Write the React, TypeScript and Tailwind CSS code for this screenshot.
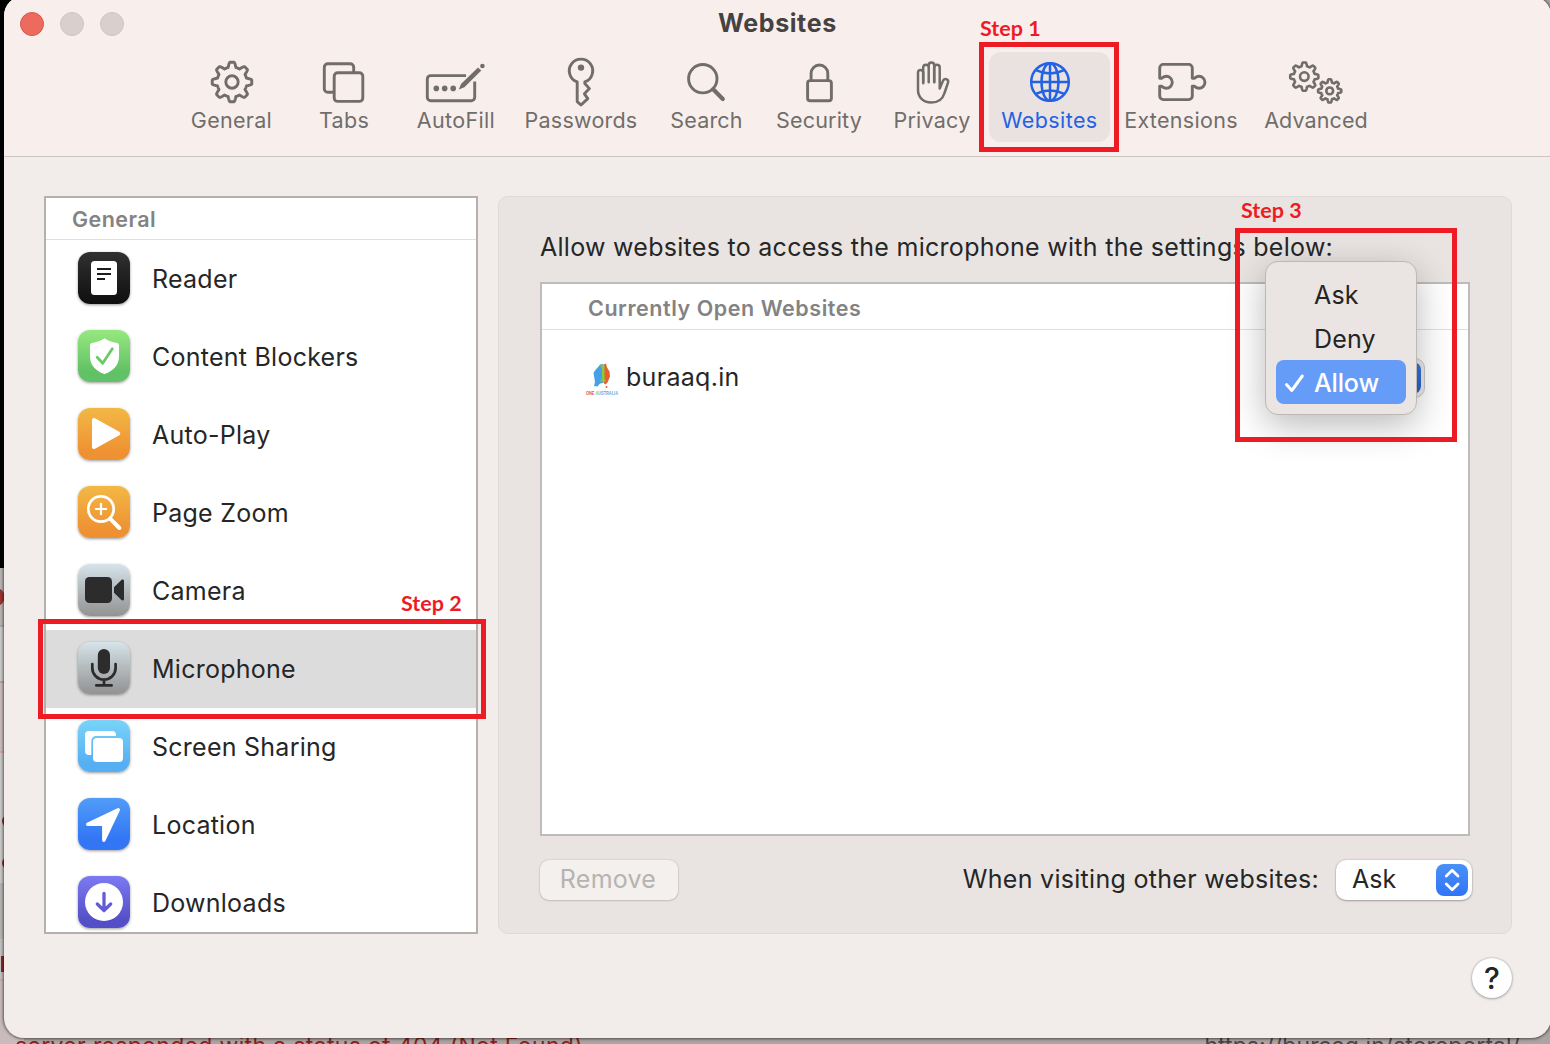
import React from "react";

function gearPath(cx: number, cy: number, rOuter: number, rInner: number) {
  const mid = (rOuter + rInner) / 2;
  const amp = (rOuter - rInner) / 2;
  const points: string[] = [];
  for (let i = 0; i < 240; i++) {
    const a = (i / 240) * Math.PI * 2;
    const wave = Math.max(-1, Math.min(1, 1.9 * Math.cos(8 * a) - 0.1));
    const r = mid + amp * wave;
    points.push(`${(cx + r * Math.sin(a)).toFixed(2)} ${(cy - r * Math.cos(a)).toFixed(2)}`);
  }
  return `M${points.join("L")}Z`;
}

const toolbar: { label: string; width: string; spacing: string; active?: boolean; icon: React.ReactNode }[] = [
  {
    label: "General",
    width: "w-[113px]",
    spacing: "tracking-[0.3px]",
    icon: (
      <>
        <path d={gearPath(32, 28, 19.8, 15)} />
        <circle cx="32" cy="28" r="6.2" />
      </>
    ),
  },
  {
    label: "Tabs",
    width: "w-[112px]",
    spacing: "tracking-[0.3px]",
    icon: (
      <>
        <rect x="22.2" y="18.8" width="28.6" height="28.6" rx="3.5" />
        <path d="M21.500 38.200h-5.700a3.500 3.500 0 0 1-3.500-3.500V13.300a3.500 3.500 0 0 1 3.500-3.500h22.400a3.500 3.500 0 0 1 3.500 3.500V18" />
      </>
    ),
  },
  {
    label: "AutoFill",
    width: "w-[112px]",
    spacing: "tracking-[0.35px]",
    icon: (
      <>
        <path d="M42 21.600H6.800a3.500 3.500 0 0 0-3.500 3.500v18.100a3.500 3.500 0 0 0 3.500 3.500h40.400a3.500 3.500 0 0 0 3.500-3.500V27.500" strokeLinecap="butt" />
        <g fill="currentColor" stroke="none">
          <circle cx="12.300" cy="34.400" r="2.800" />
          <circle cx="20.700" cy="34.400" r="2.800" />
          <circle cx="29.200" cy="34.400" r="2.800" />
          <path d="M34.800 35.600l2.200-5.600L54 13.400l3.300 3.200L40.400 33.300z" />
          <circle cx="58.400" cy="12" r="2.300" />
        </g>
      </>
    ),
  },
  {
    label: "Passwords",
    width: "w-[138px]",
    spacing: "tracking-[0.22px]",
    icon: (
      <>
        <path d="M28.200 47.600V27.900A11.700 11.700 0 1 1 35.800 27.900V29.500L40.400 34.600 35.400 39.800 38.800 44.600 32 51z" />
        <circle cx="32" cy="13.600" r="3.200" fill="currentColor" stroke="none" />
      </>
    ),
  },
  {
    label: "Search",
    width: "w-[113px]",
    spacing: "tracking-[0.2px]",
    icon: (
      <>
        <circle cx="27.800" cy="24.700" r="14.200" />
        <path d="M38.200 35.300L47.800 45" strokeWidth="4.200" />
      </>
    ),
  },
  {
    label: "Security",
    width: "w-[112px]",
    spacing: "tracking-[0.2px]",
    icon: (
      <>
        <rect x="20.600" y="26.600" width="23.800" height="20.200" rx="2.600" />
        <path d="M24.100 26.600V19.400a8.350 8.350 0 0 1 16.700 0v7.200" />
      </>
    ),
  },
  {
    label: "Privacy",
    width: "w-[114px]",
    spacing: "tracking-[0.25px]",
    icon: (
      <g strokeWidth="2.500">
        <path d="M23.200 29.300V18.600a2.600 2.600 0 0 0-5.200 0V36C18 43 23 48.600 31.300 48.600c6.600 0 11.200-3 13.200-9.600L48 28.600c1-3.800-3.800-5-5-1.800L39.700 34.500V13.600a2.750 2.750 0 0 0-5.500 0V28.300" />
        <path d="M23.200 28V13.600a2.750 2.750 0 0 1 5.500 0V28.300M28.700 28V11.200a2.750 2.750 0 0 1 5.500 0V28" />
      </g>
    ),
  },
  {
    label: "Websites",
    width: "w-[121px]",
    spacing: "tracking-[0.4px]",
    active: true,
    icon: (
      <g strokeWidth="2.500">
        <circle cx="32" cy="28" r="18.800" />
        <ellipse cx="32" cy="28" rx="8.500" ry="18.800" />
        <path d="M32 9.200v37.600M13.200 28h37.600M17.900 16.200q14.100 6.600 28.200 0M17.900 39.800q14.100-6.600 28.200 0" />
      </g>
    ),
  },
  {
    label: "Extensions",
    width: "w-[142px]",
    spacing: "tracking-[0.3px]",
    icon: (
      <path d="M10.700 24.300V14a3.600 3.600 0 0 1 3.600-3.600H39.700A3.600 3.600 0 0 1 43.300 14V24.300h2.200A6 6 0 1 1 45.500 32.300h-2.200V42a3.600 3.600 0 0 1-3.600 3.600H14.300A3.600 3.600 0 0 1 10.700 42V32.300h2.100A6 6 0 1 0 12.800 24.300z" />
    ),
  },
  {
    label: "Advanced",
    width: "w-[128px]",
    spacing: "tracking-[0.1px]",
    icon: (
      <g strokeWidth="2.600">
        <path d={gearPath(20.3, 22.6, 14.1, 10.6)} />
        <circle cx="20.300" cy="22.600" r="4.300" />
        <path d={gearPath(45.7, 36.9, 11.6, 8.6)} />
        <circle cx="45.700" cy="36.900" r="3.400" />
      </g>
    ),
  },
];

const categories: { label: string; tile: string; selected?: boolean; icon: React.ReactNode }[] = [
  {
    label: "Reader",
    tile: "from-[#313131] to-[#0f0f0f]",
    icon: (
      <>
        <rect x="13" y="9" width="26" height="34" rx="3.500" fill="#fff" />
        <path d="M19 17h14M19 22h14M19 27h8" stroke="#1c1c1c" strokeWidth="2" />
      </>
    ),
  },
  {
    label: "Content Blockers",
    tile: "from-[#93e67d] from-5% to-[#61c166] to-80%",
    icon: (
      <>
        <path d="M26.500 8.200c3.600 2.400 8 4.100 12.600 4.800q1.900.4 1.900 2.300v10.500c0 9.600-5.200 14.600-13.600 18q-.9.4-1.800 0C17.200 40.400 12 35.400 12 25.800V15.300q0-1.900 1.900-2.300c4.600-.7 9-2.400 12.600-4.800z" fill="#fff" />
        <path d="M19.200 27.300l5.500 6L34.300 18.800" stroke="#68cb68" strokeWidth="2.800" strokeLinecap="round" strokeLinejoin="round" />
      </>
    ),
  },
  {
    label: "Auto-Play",
    tile: "from-[#f2b845] to-[#ee9132] to-85%",
    icon: <path d="M16 12l24.300 13.500L16 39z" fill="#fff" stroke="#fff" strokeWidth="4" strokeLinejoin="round" />,
  },
  {
    label: "Page Zoom",
    tile: "from-[#f2b845] to-[#ee9132] to-85%",
    icon: (
      <g stroke="#fff" strokeLinecap="round">
        <circle cx="23" cy="23" r="12.700" strokeWidth="2.700" />
        <path d="M23 17.800v10.400M17.800 23h10.400" strokeWidth="2.200" />
        <path d="M32.800 33.300l8.600 8.700" strokeWidth="4" />
      </g>
    ),
  },
  {
    label: "Camera",
    tile: "from-[#d6e4ea] to-[#929292]",
    icon: (
      <g fill="#2c2c2c">
        <rect x="7" y="13" width="27" height="26" rx="4.500" />
        <path d="M36 23.200l7.400-7.200c1-.9 2.600-.5 2.600 1v18c0 1.500-1.600 1.900-2.600 1L36 28.800z" />
      </g>
    ),
  },
  {
    label: "Microphone",
    tile: "from-[#d6e4ea] to-[#929292]",
    selected: true,
    icon: (
      <>
        <rect x="19.800" y="7" width="12.200" height="25" rx="6.100" fill="#2c2c2c" />
        <path d="M14.300 22v4a11.600 11.600 0 0 0 23.300 0v-4M26 37.600v5.700M18.300 43.400h15.300" stroke="#2c2c2c" strokeWidth="2.700" strokeLinecap="round" />
      </>
    ),
  },
  {
    label: "Screen Sharing",
    tile: "from-[#79d4f8] to-[#56aef3] to-85%",
    icon: (
      <>
        <path d="M13.300 35H11a4 4 0 0 1-4-4V15a4 4 0 0 1 4-4h23a4 4 0 0 1 4 4v1H18a4.700 4.700 0 0 0-4.700 4.700z" fill="#fff" />
        <rect x="15" y="18" width="30" height="24" rx="4" fill="#fff" />
      </>
    ),
  },
  {
    label: "Location",
    tile: "from-[#519cf8] to-[#3376f5] to-80%",
    icon: <path d="M40.300 11.700L9.700 26.200H25.800V42.300z" fill="#fff" stroke="#fff" strokeWidth="3.400" strokeLinejoin="round" />,
  },
  {
    label: "Downloads",
    tile: "from-[#7d79f2] to-[#544fc7] to-85%",
    icon: (
      <>
        <circle cx="26" cy="26" r="19" fill="#fff" />
        <path d="M26 17.300v17M19.300 28l6.700 6.500 6.700-6.500" stroke="#625dd6" strokeWidth="3.300" strokeLinecap="round" strokeLinejoin="round" />
      </>
    ),
  },
];

function Annotation({ label, box, text }: { label: string; box: string; text: string }) {
  return (
    <>
      <div className={`absolute border-[5px] border-[#ed1c24] ${box}`} />
      <span className={`absolute font-[Lato] text-[21.5px] leading-6 font-bold whitespace-nowrap text-[#ed1c24] ${text}`}>{label}</span>
    </>
  );
}

function Toolbar() {
  return (
    <header className="h-[161px] shrink-0 border-b border-[#cdc5c1] bg-[#f8efed] pt-1">
      <div className="flex h-[52px] items-start">
        <div className="flex gap-4 pt-3 pl-4">
          <span className="size-6 rounded-full border border-[#d5574c] bg-[#ed6a5e]" />
          <span className="size-6 rounded-full border border-[#cdc5c3] bg-[#d9d0ce]" />
          <span className="size-6 rounded-full border border-[#cdc5c3] bg-[#d9d0ce]" />
        </div>
        <h1 className="ml-[594px] pt-[7px] text-[25px] leading-8 font-bold tracking-[0.6px] text-[#464241]">Websites</h1>
      </div>
      <nav className="flex pl-[171px]">
        {toolbar.map((item) => (
          <button
            key={item.label}
            className={`flex h-[90px] flex-col items-center rounded-xl pt-0.5 whitespace-nowrap ${item.width} ${
              item.active ? "bg-[#eae2e0] text-[#2362e3]" : "text-[#706d6b]"
            }`}
          >
            <svg width="64" height="56" viewBox="0 0 64 56" fill="none" stroke="currentColor" strokeWidth="2.900" strokeLinecap="round" strokeLinejoin="round">
              {item.icon}
            </svg>
            <span className={`-mt-1 text-[21.5px] leading-7 ${item.spacing}`}>{item.label}</span>
          </button>
        ))}
      </nav>
    </header>
  );
}

function Sidebar() {
  return (
    <aside className="h-[738px] w-[434px] shrink-0 overflow-hidden border-2 border-[#b4b0ae] bg-white">
      <div className="h-[42px] pl-[26px] text-[21.5px] leading-[42px] font-semibold tracking-[0.45px] text-[#838383] shadow-[inset_0_-1px_0_#dfdfdf]">General</div>
      {categories.map((c) => (
        <div key={c.label} className={`flex h-[78px] items-center gap-[22px] pl-8 ${c.selected ? "bg-[#dcdcdc]" : ""}`}>
          <div className={`mb-0.5 size-[52px] rounded-xl bg-linear-to-b shadow-[0_1px_3px_rgba(0,0,0,0.4)] ${c.tile}`}>
            <svg width="52" height="52" viewBox="0 0 52 52" fill="none">
              {c.icon}
            </svg>
          </div>
          <span className="text-[25px] leading-8 tracking-[0.25px] text-[#262626]">{c.label}</span>
        </div>
      ))}
    </aside>
  );
}

function Favicon() {
  return (
    <svg width="34" height="36" viewBox="0 0 34 36" className="shrink-0">
      <path d="M8.500 13l1.500-2.500L14 6l1-1.500 3-.5v19c-2.500 0-4 1-5.500 3.500l-3.500-.5 1-4z" fill="#45a1e6" />
      <path d="M18.500 4.500l2.500-1 1 4 2.500 4 .5 5-2.500 6-2 2-2-1.500z" fill="#e4602f" />
      <path d="M15 6.500l3-2 1.500 1v14h1v2h-5v-2h1.500V8z" fill="#8fc63f" />
      <circle cx="21.500" cy="27" r="1" fill="#e4602f" />
      <text x="1" y="34.500" fontSize="6" fontWeight="700" fontFamily="Liberation Sans, sans-serif" fill="#5cabdf" textLength="32" lengthAdjust="spacingAndGlyphs">
        <tspan fill="#dc5a3a">ONE</tspan>
        <tspan fill="#93c83f"> A</tspan>USTRALIA
      </text>
    </svg>
  );
}

function PermissionMenu() {
  return (
    <div className="absolute top-[261px] left-[1265px] flex h-[154px] w-[152px] flex-col rounded-[13px] border border-[#bdb8b6] bg-[#eae5e2] p-[10px] text-[25px] text-[#242424] shadow-[0_10px_36px_rgba(0,0,0,0.28)]">
      <div className="h-11 pl-[38px] leading-[47px] tracking-[0.2px]">Ask</div>
      <div className="h-11 pl-[38px] leading-[47px] tracking-[0.2px]">Deny</div>
      <div className="flex h-11 w-[130px] items-center rounded-lg bg-[#659cf7] pl-2 text-white">
        <svg width="22" height="22" viewBox="0 0 22 22" fill="none" stroke="currentColor" strokeWidth="3" strokeLinecap="round" strokeLinejoin="round">
          <path d="M2.500 13.500l5.300 6L18.300 5" />
        </svg>
        <span className="pt-[3px] pl-2 font-medium tracking-[-0.15px]">Allow</span>
      </div>
    </div>
  );
}

function Content() {
  return (
    <section className="flex h-[738px] w-[1014px] flex-col rounded-[10px] border border-[#dfdad7] bg-[#e9e4e1] px-[41px] pt-[34px] text-[#262626]">
      <p className="text-[25px] leading-8 tracking-[0.28px] whitespace-nowrap">Allow websites to access the microphone with the settings below:</p>
      <div className="mt-[19px] h-[554px] w-[930px] shrink-0 border-2 border-[#bebcbb] bg-white">
        <div className="h-[46px] pl-[46px] text-[21.5px] leading-[49px] font-semibold tracking-[0.55px] text-[#838383] shadow-[inset_0_-1px_0_#dfdfdf]">Currently Open Websites</div>
        <div className="flex h-24 items-center pr-[44px] pl-[43px]">
          <Favicon />
          <span className="-mt-0.5 pl-[7px] text-[25px] leading-8 tracking-[0.3px]">buraaq.in</span>
          <div className="ml-auto flex h-10 w-[137px] items-center justify-end rounded-[10px] border border-[#c9c9c9] bg-[#ececec] pr-[3px] -mr-px">
            <span className="size-8 rounded-lg bg-linear-to-b from-[#3a76dc] to-[#2b60cf]" />
          </div>
        </div>
      </div>
      <div className="mt-6 flex items-center">
        <button className="h-10 w-[138px] rounded-[9px] bg-[#f3f0ee] pb-0.5 text-[25px] leading-8 tracking-[0.25px] text-[#b7b3b1] shadow-[0_0_2px_rgba(0,0,0,0.2),0_1px_2px_rgba(0,0,0,0.12)]">
          <span className="-ml-0.5">Remove</span>
        </button>
        <span className="-mt-0.5 ml-auto text-[25px] leading-8 tracking-[0.3px]">When visiting other websites:</span>
        <button className="-mr-[2px] ml-[17px] flex h-10 w-[136px] shrink-0 items-center justify-between rounded-[10px] bg-white pr-1 pl-4 text-[25px] shadow-[0_0_2px_rgba(0,0,0,0.25),0_1px_2px_rgba(0,0,0,0.25)]">
          Ask
          <span className="flex size-8 items-center justify-center rounded-lg bg-linear-to-b from-[#4a91f8] to-[#3074f5]">
            <svg width="32" height="32" viewBox="0 0 32 32" fill="none" stroke="#fff" strokeWidth="2.800" strokeLinecap="round" strokeLinejoin="round">
              <path d="M10.300 12l5.900-5.700L22 12M10.300 20l5.900 5.700L22 20" />
            </svg>
          </span>
        </button>
      </div>
    </section>
  );
}

function Backdrop() {
  return (
    <div className="absolute inset-0 overflow-hidden bg-[#aca3a3]">
      <div className="flex h-full w-6 flex-col">
        <div className="h-[568px] shrink-0 bg-black" />
        <div className="h-[57px] shrink-0 bg-[#b9b5b5] pt-5">
          <div className="-ml-[13px] size-[18px] rounded-full bg-[#9c3430]" />
        </div>
        <div className="h-[58px] shrink-0 border-y-2 border-[#a9a9a9] bg-[#cbcaca]" />
        <div className="h-[70px] shrink-0 border-b-2 border-[#cfa9a8] bg-[#ccbdbc]" />
        <div className="h-[130px] shrink-0 bg-[#c9c8c8] pt-[62px] pl-0.5">
          <div className="h-3 w-4 rounded-full bg-[#8e2925]" />
          <div className="mt-[30px] h-3 w-4 rounded-full bg-[#8e2925]" />
        </div>
        <div className="h-[56px] shrink-0 bg-[#b8b5b5]" />
        <div className="h-[42px] shrink-0 border-b-2 border-[#cfa9a8] bg-[#c4c1c1] pt-[17px]">
          <div className="ml-px h-4 w-1 bg-[#8e2925]" />
        </div>
        <div className="grow bg-[#c9bbbb]" />
      </div>
      <div className="absolute top-[1032px] left-0 flex w-full justify-between pr-[30px] text-[23px] leading-7 whitespace-nowrap">
        <span className="pl-[15px] tracking-[0.33px] text-[#8a1f1b]">server responded with a status of 404 (Not Found)</span>
        <span className="tracking-[0.05px] text-[#4a4444]">https://buraaq.in/storeportal/</span>
      </div>
    </div>
  );
}

export default function App() {
  return (
    <div className="relative h-[1044px] w-[1550px] overflow-hidden font-['Inter',sans-serif]">
      <Backdrop />
      <main className="relative -mt-1 ml-1 flex h-[1042px] w-[1547px] flex-col overflow-hidden rounded-[20px] bg-[#f2edea] shadow-[0_0_3px_1px_rgba(0,0,0,0.55)]">
        <Toolbar />
        <div className="flex gap-5 pt-[39px] pl-10">
          <Sidebar />
          <Content />
        </div>
        <button className="mt-6 ml-[1468px] size-10 rounded-full bg-white text-[30px] leading-10 font-medium text-[#242424] shadow-[0_0_2px_rgba(0,0,0,0.3),0_1px_3px_rgba(0,0,0,0.25)]">?</button>
      </main>
      <PermissionMenu />
      <Annotation label="Step 1" box="top-[42px] left-[979px] h-[110px] w-[140px]" text="top-[16px] left-[980px]" />
      <Annotation label="Step 2" box="top-[619px] left-[38px] h-[100px] w-[448px]" text="top-[591px] left-[401px]" />
      <Annotation label="Step 3" box="top-[228px] left-[1235px] h-[214px] w-[222px]" text="top-[198px] left-[1241px]" />
    </div>
  );
}
